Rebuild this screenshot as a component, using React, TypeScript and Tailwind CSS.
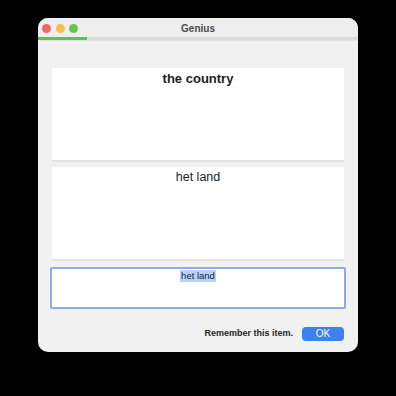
export default function App() {
  return (
    <div className="w-[396px] h-[396px] bg-black pt-[18px] pl-[38px] font-['Liberation_Sans',Arial,sans-serif]">
      <div className="w-[320px] h-[334px] rounded-[10px] bg-[#f2f1f1] overflow-hidden flex flex-col">
        {/* title bar */}
        <div className="relative h-[19px] flex items-center justify-center bg-[#efeeee]">
          <div className="absolute left-[4px] top-[6px] flex gap-[4.5px]">
            <span className="w-[9px] h-[9px] rounded-full bg-[#ed6a5e]" />
            <span className="w-[9px] h-[9px] rounded-full bg-[#f5bf4f]" />
            <span className="w-[9px] h-[9px] rounded-full bg-[#61c554]" />
          </div>
          <span className="text-[10px] font-semibold text-[#4a4a4a] pt-[1px]">Genius</span>
        </div>

        {/* progress */}
        <div className="h-[3px] bg-[#dcdbdb]">
          <div className="h-full w-[49px] bg-[#5bc25b]" />
        </div>
        <div className="h-px bg-[#e6e5e5]" />

        <div className="flex-1 flex flex-col px-[14px] pt-[27px]">
          <div className="h-[92px] bg-white shadow-[0_2px_0_#e3e2e2] flex justify-center pt-[1px]">
            <span className="text-[13px] font-bold text-[#1d1d1d]">the country</span>
          </div>
          <div className="h-[92px] mt-[7px] bg-white shadow-[0_2px_0_#e3e2e2] flex justify-center pt-[1px]">
            <span className="text-[12.5px] text-[#1d1d1d]">het land</span>
          </div>

          <div className="mt-[8px] -mx-[2px] h-[42px] bg-white border-2 border-[#8eacea] rounded-[2px] flex justify-center pt-[1px]">
            <span className="text-[9.5px] text-[#1d1d1d] bg-[#b6d4fb] h-[12px] leading-[12px] px-[1px]">het land</span>
          </div>

          <div className="mt-[18px] flex items-center justify-end gap-[9px]">
            <span className="text-[9px] font-bold text-[#262626]">Remember this item.</span>
            <button className="w-[42px] h-[14px] rounded-[4px] bg-[#3b82f0] text-white text-[10px] leading-[14px]">
              OK
            </button>
          </div>
        </div>
      </div>
    </div>
  )
}
